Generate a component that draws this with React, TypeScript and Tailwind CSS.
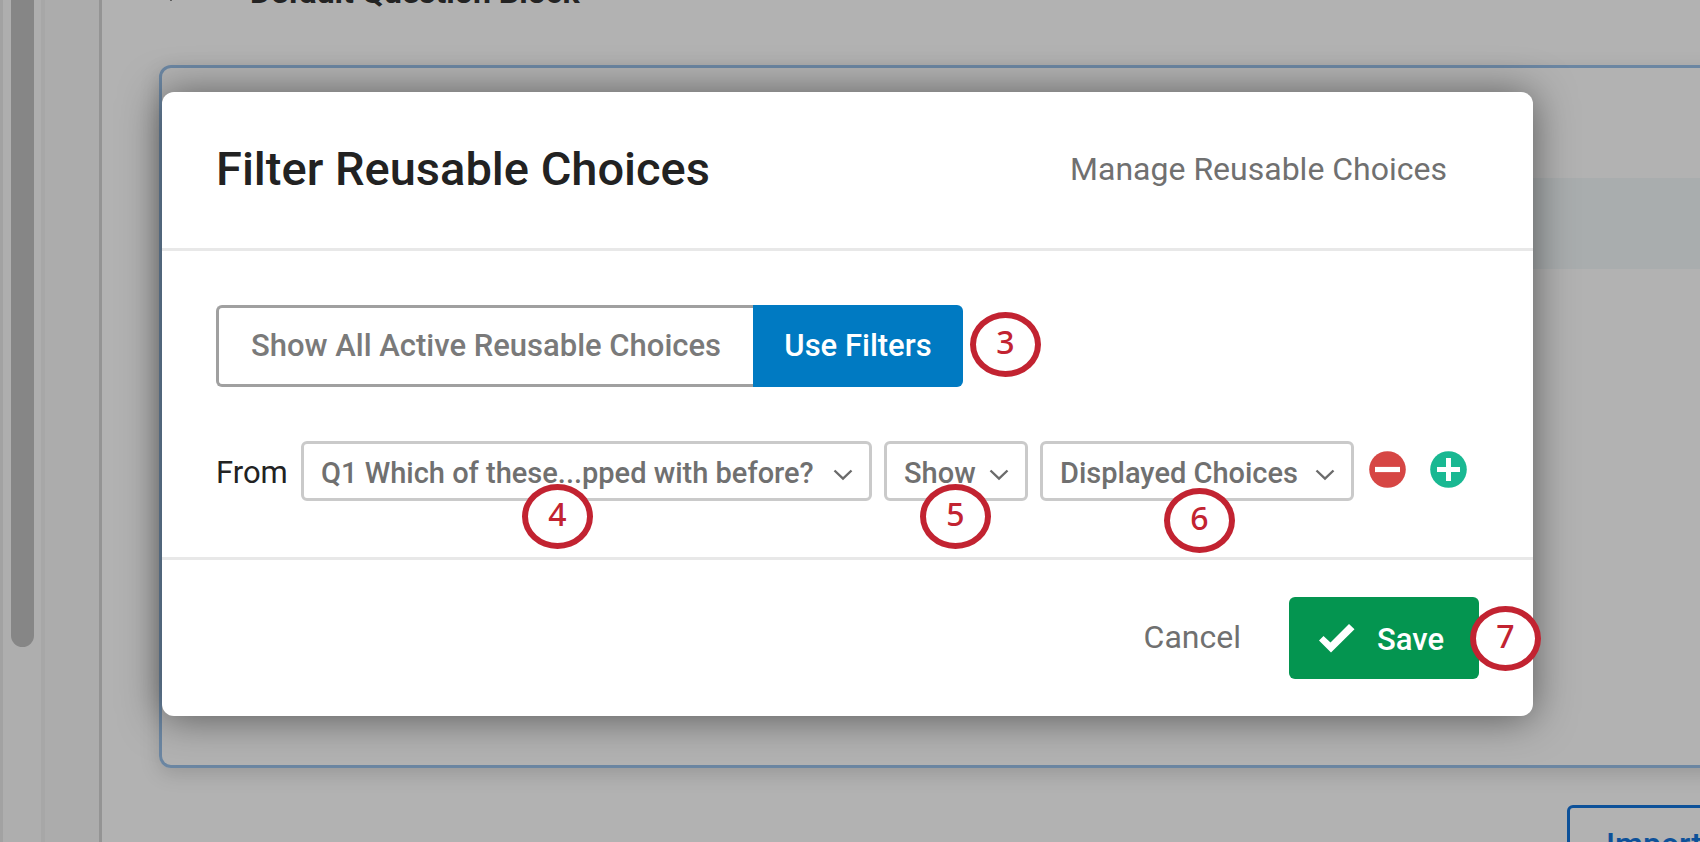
import React, { useState } from 'react';

interface BadgeProps {
    n: number;
    className: string;
}

const Badge: React.FC<BadgeProps> = ({ n, className }) => (
    <span
        className={`absolute z-10 flex h-[65px] w-[71px] items-center justify-center rounded-[50%] border-6 border-[#c22331] bg-white pb-1.5 font-['Noto_Sans',sans-serif] text-[32px] leading-none font-medium text-[#c22331] pointer-events-none ${className}`}
    >
        {n}
    </span>
);

interface FilterSelectProps {
    label: string;
    options: string[];
    className: string;
    children?: React.ReactNode;
}

const FilterSelect: React.FC<FilterSelectProps> = ({ label, options, className, children }) => (
    <div className={`relative ${className}`}>
        <select
            aria-label={label}
            className="h-[60px] w-full appearance-none rounded-md border-3 border-[#cacaca] bg-white pt-1.5 pl-[17px] text-[29px] font-medium text-[#707070]"
        >
            {options.map(o => <option key={o}>{o}</option>)}
        </select>
        <svg className="absolute top-[28px] right-[19px] pointer-events-none" width="20" height="12" viewBox="0 0 20 12" fill="none" stroke="#6b6b6b" strokeWidth="2.4">
            <path d="M1.5 1.5 10 9.5 18.5 1.5" />
        </svg>
        {children}
    </div>
);

// Survey editor that sits behind the dialog
const Editor = () => (
    <div className="flex h-full bg-white">
        <div className="flex w-[102px] shrink-0 border-r-3 border-[#d4d4d4] bg-[#f6f6f6]">
            <div className="w-[45px] border-r-4 border-l-3 border-r-[#f0f0f0] border-l-[#e9e9e9] bg-[#f9f9f9] pl-2">
                <div className="h-[647px] w-[23px] rounded-b-full bg-[#c0c0c0]" />
            </div>
        </div>
        <div className="-mt-7 min-w-0 flex-1 overflow-hidden pl-[57px]">
            <div className="flex h-[93px] items-start">
                <svg className="mr-[66px]" width="25" height="40" viewBox="0 0 25 40" fill="none" stroke="#333" strokeWidth="3">
                    <path d="M4 19 12 27 20 19" />
                </svg>
                <h2 className="text-[32px] leading-10 font-bold text-[#333]">Default Question Block</h2>
            </div>
            <div className="-mr-6 h-[703px] rounded-xl border-3 border-[#9ac1e9] pt-[110px] shadow-[0_6px_20px_rgba(0,0,0,0.15)]">
                <div className="h-[91px] bg-[#f2f8f9]" />
            </div>
            <div className="mt-[37px] -mr-6 flex justify-end">
                <button className="h-[78px] w-[157px] shrink-0 rounded-md border-3 border-[#1474dc] pl-9 text-left text-[32px] font-medium whitespace-nowrap text-[#1474dc]">
                    Import
                </button>
            </div>
        </div>
    </div>
);

export default function App() {
    const [useFilters, setUseFilters] = useState(true);

    const segment = 'h-[82px] text-[31px] font-medium whitespace-nowrap';
    const active = 'bg-[#007ac2] text-white';
    const inactive = 'border-3 border-[#a0a0a0] bg-white text-[#7a7a7a]';

    return (
        <div className="relative h-screen overflow-hidden font-[Roboto,sans-serif]">
            <Editor />

            {/* Overlay */}
            <div className="absolute inset-0 bg-black/30 pt-[92px] pr-[167px] pl-[162px]">
                <div role="dialog" aria-label="Filter Reusable Choices" className="rounded-xl bg-white shadow-[0_2px_40px_rgba(0,0,0,0.5)]">
                    <header className="flex h-[159px] items-center justify-between border-b-3 border-[#e8e8e8] pr-[86px] pb-0.5 pl-[54px]">
                        <h1 className="text-[47px] font-medium text-[#222]">Filter Reusable Choices</h1>
                        <a href="#manage" className="text-[32px] text-[#707070]">Manage Reusable Choices</a>
                    </header>

                    <div className="px-[54px] pt-[54px] pb-14">
                        <div className="flex">
                            <button
                                onClick={() => setUseFilters(false)}
                                className={`${segment} w-[537px] rounded-l-md ${useFilters ? `${inactive} border-r-0` : active}`}
                            >
                                Show All Active Reusable Choices
                            </button>
                            <div className="relative">
                                <button
                                    onClick={() => setUseFilters(true)}
                                    className={`${segment} w-[210px] rounded-r-md ${useFilters ? active : `${inactive} border-l-0`}`}
                                >
                                    Use Filters
                                </button>
                                <Badge n={3} className="top-[7px] left-[217px]" />
                            </div>
                        </div>

                        <div className="mt-[54px] flex items-center">
                            <span className="w-[85px] pt-1 text-[31px] text-[#222]">From</span>
                            <FilterSelect label="Question" options={['Q1 Which of these...pped with before?']} className="w-[571px]">
                                <Badge n={4} className="top-[43px] left-[221px]" />
                            </FilterSelect>
                            <FilterSelect label="Action" options={['Show', 'Hide']} className="ml-3 w-[144px]">
                                <Badge n={5} className="top-[43px] left-9" />
                            </FilterSelect>
                            <FilterSelect label="Choice group" options={['Displayed Choices']} className="ml-3 w-[314px]">
                                <Badge n={6} className="top-[47px] left-[124px]" />
                            </FilterSelect>
                            <button aria-label="Remove filter" className="mb-1 ml-[15px]">
                                <svg width="37" height="37" viewBox="0 0 37 37">
                                    <circle cx="18.5" cy="18.5" r="18.3" fill="#d64644" />
                                    <path d="M6 18.5h25" stroke="#fff" strokeWidth="5.2" />
                                </svg>
                            </button>
                            <button aria-label="Add filter" className="mb-1 ml-6">
                                <svg width="37" height="37" viewBox="0 0 37 37">
                                    <circle cx="18.5" cy="18.5" r="18.3" fill="#19b892" />
                                    <path d="M7 18.5h23M18.5 7v23" stroke="#fff" strokeWidth="5" />
                                </svg>
                            </button>
                        </div>
                    </div>

                    <footer className="flex items-center justify-end border-t-3 border-[#e8e8e8] py-[37px] pr-[54px]">
                        <button className="mr-12 pb-0.5 text-[32px] text-[#707070]">Cancel</button>
                        <div className="relative">
                            <button className="flex h-[82px] w-[190px] items-center rounded-md bg-[#049550] pl-[30px] text-[31px] font-medium text-white">
                                <svg className="mr-[22px]" width="36" height="29" viewBox="0 0 36 29" fill="#fff">
                                    <path d="M0 16.5 4.5 12 11.5 18.5 30 0 35.5 5.2 12 28.5z" />
                                </svg>
                                <span className="pt-1">Save</span>
                            </button>
                            <Badge n={7} className="top-[9px] left-[181px]" />
                        </div>
                    </footer>
                </div>
            </div>
        </div>
    );
}
